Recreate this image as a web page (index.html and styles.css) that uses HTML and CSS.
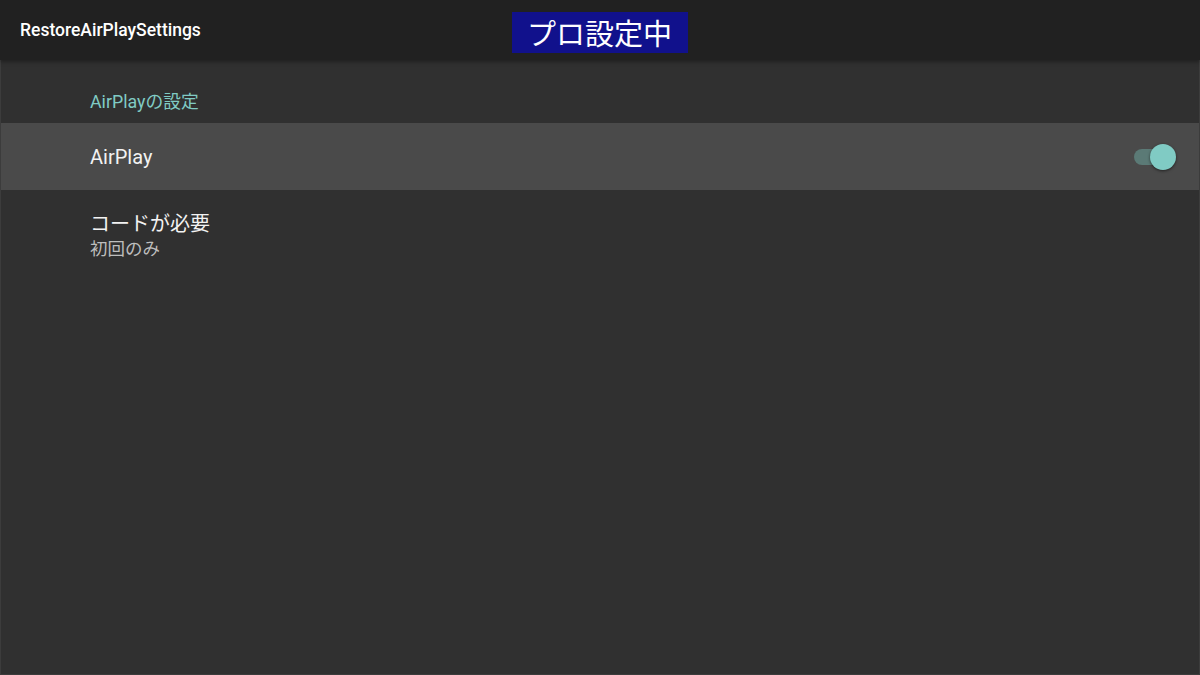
FILE: index.html
```html
<!DOCTYPE html>
<html lang="ja">
<head>
<meta charset="utf-8">
<title>RestoreAirPlaySettings</title>
<link rel="stylesheet" href="styles.css">
</head>
<body>
<div class="app">
  <header class="toolbar">
    <div class="title">RestoreAirPlaySettings</div>
    <div class="badge">プロ設定中</div>
    <div class="spacer"></div>
  </header>
  <main class="content">
    <div class="section-title">AirPlayの設定</div>
    <div class="row row-selected">
      <div class="row-text">
        <div class="row-label">AirPlay</div>
      </div>
      <div class="switch">
        <div class="switch-track"></div>
        <div class="switch-thumb"></div>
      </div>
    </div>
    <div class="row row-two">
      <div class="row-text">
        <div class="row-label">コードが必要</div>
        <div class="row-sub">初回のみ</div>
      </div>
    </div>
  </main>
</div>
</body>
</html>
```

FILE: styles.css
```css
html, body {
  margin: 0;
  padding: 0;
  height: 100%;
}
body {
  background: #303030;
  font-family: Roboto, "Noto Sans CJK JP", sans-serif;
  color: #ffffff;
}
.app {
  display: flex;
  flex-direction: column;
  height: 675px;
  box-sizing: border-box;
}
.toolbar {
  position: relative;
  z-index: 2;
  height: 60px;
  flex: none;
  background: #212121;
  box-shadow: 0 2px 4px rgba(0, 0, 0, 0.35);
  display: grid;
  grid-template-columns: 1fr auto 1fr;
  align-items: center;
}
.title {
  padding-left: 20px;
  font-size: 17.5px;
  font-weight: 500;
  color: #ffffff;
}
.badge {
  background: #11118c;
  color: #ffffff;
  font-family: "Noto Sans CJK JP", sans-serif;
  font-size: 29px;
  line-height: 41px;
  height: 41px;
  padding: 0 16px 0 15px;
  margin-top: 5px;
}
.content {
  flex: 1;
  background: #303030;
  border-left: 1px solid #3c3c3c;
  border-right: 1px solid #3c3c3c;
  border-bottom: 1px solid #3c3c3c;
}
.section-title {
  padding: 30px 0 9px 89px;
  font-size: 17.8px;
  line-height: 24px;
  color: #80cbc4;
}
.row {
  display: flex;
  align-items: center;
  padding: 0 23px 0 89px;
}
.row-selected {
  height: 67px;
  background: #4a4a4a;
}
.row-text {
  flex: 1;
}
.row-label {
  font-size: 20px;
  line-height: 24px;
  color: #f2f2f2;
}
.row-two {
  padding-top: 22px;
  align-items: flex-start;
}
.row-sub {
  margin-top: 1px;
  font-size: 17.5px;
  line-height: 24px;
  color: #bdbdbd;
}
.switch {
  position: relative;
  width: 42px;
  height: 26px;
}
.switch-track {
  position: absolute;
  left: 0;
  top: 5px;
  width: 34px;
  height: 16px;
  border-radius: 8px;
  background: #5b7a76;
}
.switch-thumb {
  position: absolute;
  right: 0;
  top: 0;
  width: 26px;
  height: 26px;
  border-radius: 50%;
  background: #80cbc4;
  box-shadow: 0 1px 3px rgba(0, 0, 0, 0.55);
}
```
